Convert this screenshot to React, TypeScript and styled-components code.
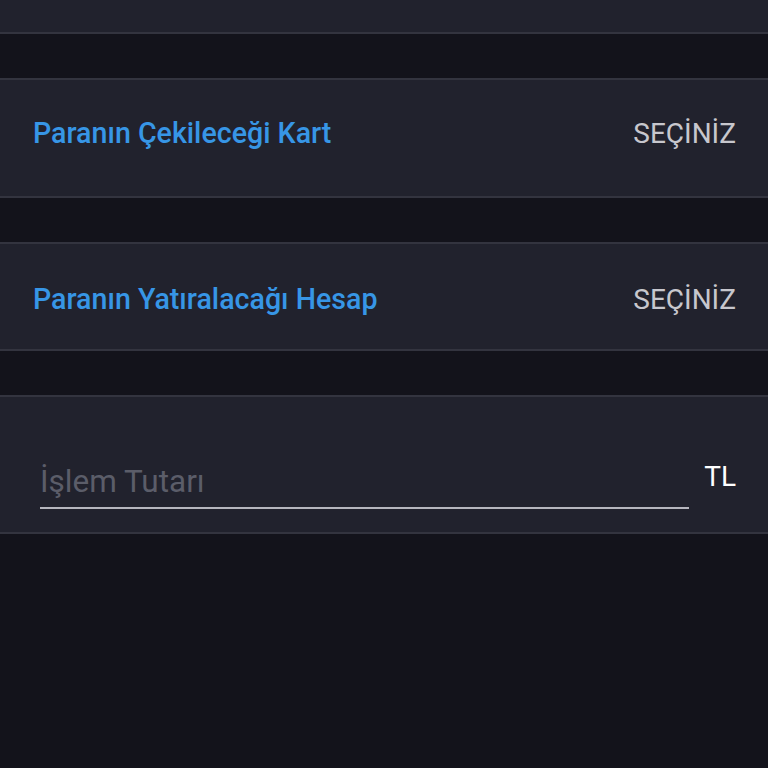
import styled, { createGlobalStyle } from "styled-components";

const GlobalStyle = createGlobalStyle`
  html, body {
    margin: 0;
    padding: 0;
    background: #13131b;
  }
  body {
    font-family: Roboto, "Noto Sans", "Liberation Sans", sans-serif;
    -webkit-font-smoothing: antialiased;
  }
`;

const Page = styled.div`
  min-height: 768px;
  background: #13131b;
  display: flex;
  flex-direction: column;
  gap: 44px;
`;

const Card = styled.section<{ $top?: number; $bottom?: number; $noTop?: boolean }>`
  background: #21222d;
  border-top: ${(p) => (p.$noTop ? "none" : "2px solid #33343f")};
  border-bottom: 2px solid #33343f;
  padding: ${(p) => p.$top ?? 0}px 32px ${(p) => p.$bottom ?? 0}px 33px;
`;

const TopStub = styled(Card)`
  height: 32px;
  padding: 0;
`;

const SelectRow = styled.div`
  display: flex;
  align-items: center;
  justify-content: space-between;
  cursor: pointer;
`;

const Label = styled.span`
  font-size: 28.6px;
  line-height: 33px;
  font-weight: 500;
  color: #3796e6;
`;

const Choose = styled.span`
  font-size: 28px;
  line-height: 33px;
  font-weight: 400;
  color: #c7c7cd;
`;

const AmountRow = styled.div`
  display: flex;
  align-items: flex-start;
  gap: 15px;
  padding-left: 7px;
`;

const AmountInput = styled.input`
  flex: 1;
  min-width: 0;
  margin-top: 3px;
  padding: 0 0 6px;
  border: none;
  border-bottom: 2px solid #b6b6be;
  background: transparent;
  outline: none;
  font-family: Roboto, "Noto Sans", "Liberation Sans", sans-serif;
  font-size: 31.5px;
  line-height: 38px;
  color: #ffffff;

  &::placeholder {
    color: #5b5d69;
  }
`;

const Currency = styled.span`
  font-size: 28px;
  line-height: 33px;
  color: #ffffff;
`;

export default function App() {
  return (
    <>
      <GlobalStyle />
      <Page>
        <TopStub $noTop />
        <Card $top={37} $bottom={46}>
          <SelectRow>
            <Label>Paranın Çekileceği Kart</Label>
            <Choose>SEÇİNİZ</Choose>
          </SelectRow>
        </Card>
        <Card $top={39} $bottom={33}>
          <SelectRow>
            <Label>Paranın Yatıralacağı Hesap</Label>
            <Choose>SEÇİNİZ</Choose>
          </SelectRow>
        </Card>
        <Card $top={63} $bottom={23}>
          <AmountRow>
            <AmountInput type="text" inputMode="decimal" placeholder="İşlem Tutarı" />
            <Currency>TL</Currency>
          </AmountRow>
        </Card>
      </Page>
    </>
  );
}
